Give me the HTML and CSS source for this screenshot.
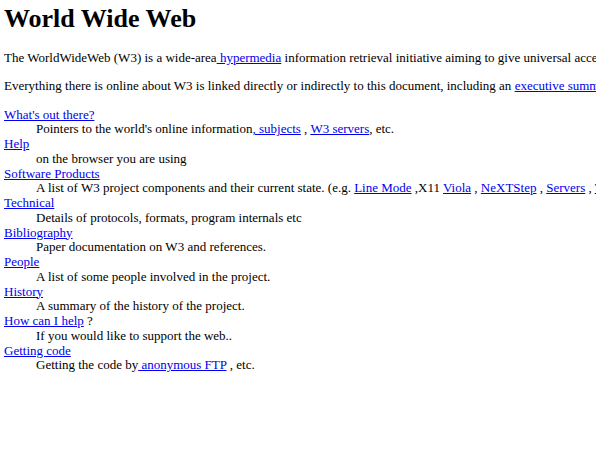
FILE: index.html
```
<!DOCTYPE html>
<html lang="en">
<head>
    <meta charset="UTF-8">
    <title>The World Wide Web project</title>
    <link rel="stylesheet" href="styles.css">
</head>
<body>
    <div class="page">
        <h1>World Wide Web</h1>
        <p>The WorldWideWeb (W3) is a wide-area<a href="#"> hypermedia</a> information retrieval initiative aiming to give universal access to a large universe of documents.</p>
        <p>Everything there is online about W3 is linked directly or indirectly to this document, including an <a href="#">executive summary</a> of the project, <a href="#">Mailing lists</a> , <a href="#">Policy</a> , November's <a href="#">W3 news</a> , <a href="#">Frequently Asked Questions</a> .</p>
        <dl>
            <dt><a href="#">What's out there?</a></dt>
            <dd>Pointers to the world's online information<a href="#">, subjects</a> , <a href="#">W3 servers</a>, etc.</dd>
            <dt><a href="#">Help</a></dt>
            <dd>on the browser you are using</dd>
            <dt><a href="#">Software Products</a></dt>
            <dd>A list of W3 project components and their current state. (e.g. <a href="#">Line Mode</a> ,X11 <a href="#">Viola</a> , <a href="#">NeXTStep</a> , <a href="#">Servers</a> , <a href="#">Tools</a> , <a href="#">Mail robot</a> , <a href="#">Library</a> )</dd>
            <dt><a href="#">Technical</a></dt>
            <dd>Details of protocols, formats, program internals etc</dd>
            <dt><a href="#">Bibliography</a></dt>
            <dd>Paper documentation on W3 and references.</dd>
            <dt><a href="#">People</a></dt>
            <dd>A list of some people involved in the project.</dd>
            <dt><a href="#">History</a></dt>
            <dd>A summary of the history of the project.</dd>
            <dt><a href="#">How can I help</a> ?</dt>
            <dd>If you would like to support the web..</dd>
            <dt><a href="#">Getting code</a></dt>
            <dd>Getting the code by<a href="#"> anonymous FTP</a> , etc.</dd>
        </dl>
    </div>
</body>
</html>
```
FILE: styles.css
```
html{overflow: hidden;}
body{
    margin: 4px;
    font-family: "Liberation Serif", "Times New Roman", serif;
    font-size: 13px;
    line-height: 14.75px;
    color: #000;
    background: #fff;
}

.page{
    width: 1400px;
}

h1{
    font-size: 26px;
    line-height: 30px;
    margin: 0 0 17px 0;
}

p{
    margin: 13.5px 0;
    white-space: nowrap;
}

a{
    color: #0000ee;
}

dl{
    margin: 13.5px 0;
}

dd{
    margin-left: 32px;
    white-space: nowrap;
}
```
